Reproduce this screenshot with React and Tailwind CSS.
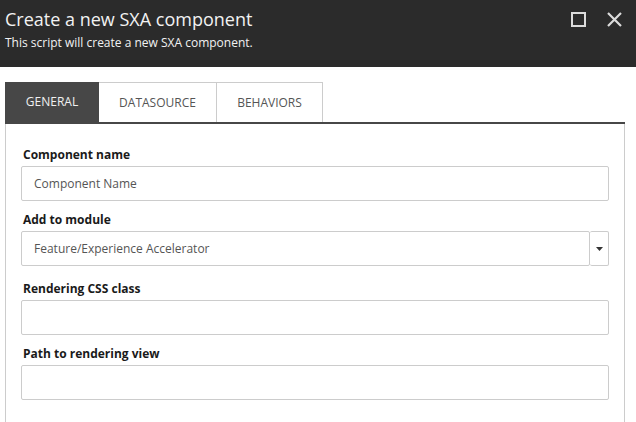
import React from "react";

const font = { fontFamily: '"Open Sans", "Noto Sans", sans-serif' };

function Field({ label, children, className = "" }) {
  return (
    <div className={"flex flex-col " + className}>
      <div className="h-[16px] text-[12px] leading-[16px] font-bold text-[#1a1a1a] pl-[2px]">{label}</div>
      <div className="mt-[3px]">{children}</div>
    </div>
  );
}

function TextBox({ placeholder }) {
  return (
    <div className="h-[35px] border border-[#cccccc] rounded-[2px] bg-white flex items-center px-[12px] text-[12px] text-[#555555]">
      {placeholder}
    </div>
  );
}

export default function App() {
  return (
    <div className="w-[636px] h-[422px] bg-white overflow-hidden" style={font}>
      <div className="h-[67px] bg-[#2b2b2b] flex justify-between pl-[5px] pr-[14px]">
        <div className="flex flex-col">
          <div className="mt-[7px] text-[18px] leading-[24px] text-[#f2f2f2]">Create a new SXA component</div>
          <div className="mt-[4px] text-[12px] leading-[16px] text-[#f2f2f2]">This script will create a new SXA component.</div>
        </div>
        <div className="flex items-start gap-[21px] pt-[12px]">
          <div className="w-[15px] h-[15px] border-2 border-[#dcdcdc]" />
          <svg width="15" height="15" viewBox="0 0 15 15">
            <path d="M1 1 L14 14 M14 1 L1 14" stroke="#dcdcdc" strokeWidth="2.2" />
          </svg>
        </div>
      </div>
      <div className="pt-[15px] px-[5px] pr-[11px]">
        <div className="flex h-[40px]">
          <div className="w-[94px] bg-[#474747] text-[#f0f0f0] text-[12px] flex items-center justify-center">GENERAL</div>
          <div className="w-[118px] border-t border-r border-[#cccccc] text-[#555555] text-[12px] flex items-center justify-center">DATASOURCE</div>
          <div className="w-[106px] border-t border-r border-[#cccccc] text-[#555555] text-[12px] flex items-center justify-center">BEHAVIORS</div>
        </div>
        <div className="h-[2px] bg-[#474747]" />
        <div className="border-l border-r border-[#cccccc] h-[300px] px-[15px] pt-[23px]">
          <Field label="Component name">
            <TextBox placeholder="Component Name" />
          </Field>
          <Field label="Add to module" className="mt-[11px]">
            <div className="flex h-[35px]">
              <div className="flex-1 border border-[#cccccc] rounded-[2px] flex items-center px-[12px] text-[12px] text-[#555555]">
                Feature/Experience Accelerator
              </div>
              <div className="w-[19px] border border-l-0 border-[#cccccc] rounded-[2px] flex items-center justify-center">
                <svg width="7" height="4" viewBox="0 0 7 4">
                  <path d="M0 0 L7 0 L3.5 4 Z" fill="#333333" />
                </svg>
              </div>
            </div>
          </Field>
          <Field label="Rendering CSS class" className="mt-[15px]">
            <TextBox placeholder="" />
          </Field>
          <Field label="Path to rendering view" className="mt-[11px]">
            <TextBox placeholder="" />
          </Field>
        </div>
      </div>
    </div>
  );
}
